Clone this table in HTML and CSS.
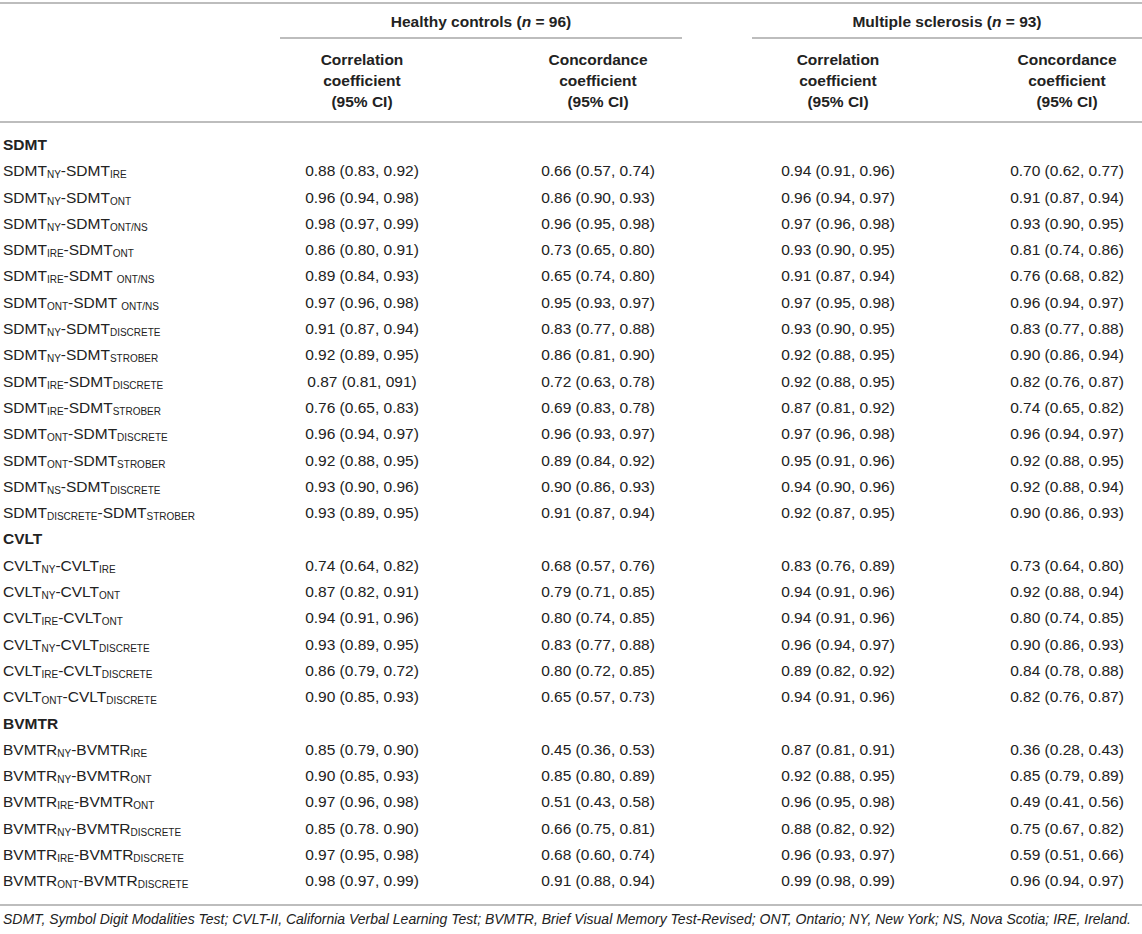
FILE: index.html
```html
<!DOCTYPE html>
<html lang="en">
<head>
<meta charset="utf-8">
<title>Correlation and concordance coefficients</title>
<link rel="stylesheet" href="styles.css">
</head>
<body>
<table class="tbl">
  <colgroup>
    <col class="c-label">
    <col class="c-hc1">
    <col class="c-hc2">
    <col class="c-ms1">
    <col class="c-ms2">
  </colgroup>
  <thead>
    <tr class="groups">
      <th></th>
      <th colspan="2"><div class="grp grp-hc">Healthy controls (<i>n</i> = 96)</div></th>
      <th colspan="2"><div class="grp grp-ms">Multiple sclerosis (<i>n</i> = 93)</div></th>
    </tr>
    <tr class="subs">
      <th></th>
      <th>Correlation<br>coefficient<br>(95% CI)</th>
      <th>Concordance<br>coefficient<br>(95% CI)</th>
      <th>Correlation<br>coefficient<br>(95% CI)</th>
      <th>Concordance<br>coefficient<br>(95% CI)</th>
    </tr>
  </thead>
  <tbody>
    <tr class="sec"><td>SDMT</td><td></td><td></td><td></td><td></td></tr>
    <tr><td>SDMT<sub>NY</sub>-SDMT<sub>IRE</sub></td><td>0.88 (0.83, 0.92)</td><td>0.66 (0.57, 0.74)</td><td>0.94 (0.91, 0.96)</td><td>0.70 (0.62, 0.77)</td></tr>
    <tr><td>SDMT<sub>NY</sub>-SDMT<sub>ONT</sub></td><td>0.96 (0.94, 0.98)</td><td>0.86 (0.90, 0.93)</td><td>0.96 (0.94, 0.97)</td><td>0.91 (0.87, 0.94)</td></tr>
    <tr><td>SDMT<sub>NY</sub>-SDMT<sub>ONT/NS</sub></td><td>0.98 (0.97, 0.99)</td><td>0.96 (0.95, 0.98)</td><td>0.97 (0.96, 0.98)</td><td>0.93 (0.90, 0.95)</td></tr>
    <tr><td>SDMT<sub>IRE</sub>-SDMT<sub>ONT</sub></td><td>0.86 (0.80, 0.91)</td><td>0.73 (0.65, 0.80)</td><td>0.93 (0.90, 0.95)</td><td>0.81 (0.74, 0.86)</td></tr>
    <tr><td>SDMT<sub>IRE</sub>-SDMT <sub>ONT/NS</sub></td><td>0.89 (0.84, 0.93)</td><td>0.65 (0.74, 0.80)</td><td>0.91 (0.87, 0.94)</td><td>0.76 (0.68, 0.82)</td></tr>
    <tr><td>SDMT<sub>ONT</sub>-SDMT <sub>ONT/NS</sub></td><td>0.97 (0.96, 0.98)</td><td>0.95 (0.93, 0.97)</td><td>0.97 (0.95, 0.98)</td><td>0.96 (0.94, 0.97)</td></tr>
    <tr><td>SDMT<sub>NY</sub>-SDMT<sub>DISCRETE</sub></td><td>0.91 (0.87, 0.94)</td><td>0.83 (0.77, 0.88)</td><td>0.93 (0.90, 0.95)</td><td>0.83 (0.77, 0.88)</td></tr>
    <tr><td>SDMT<sub>NY</sub>-SDMT<sub>STROBER</sub></td><td>0.92 (0.89, 0.95)</td><td>0.86 (0.81, 0.90)</td><td>0.92 (0.88, 0.95)</td><td>0.90 (0.86, 0.94)</td></tr>
    <tr><td>SDMT<sub>IRE</sub>-SDMT<sub>DISCRETE</sub></td><td>0.87 (0.81, 091)</td><td>0.72 (0.63, 0.78)</td><td>0.92 (0.88, 0.95)</td><td>0.82 (0.76, 0.87)</td></tr>
    <tr><td>SDMT<sub>IRE</sub>-SDMT<sub>STROBER</sub></td><td>0.76 (0.65, 0.83)</td><td>0.69 (0.83, 0.78)</td><td>0.87 (0.81, 0.92)</td><td>0.74 (0.65, 0.82)</td></tr>
    <tr><td>SDMT<sub>ONT</sub>-SDMT<sub>DISCRETE</sub></td><td>0.96 (0.94, 0.97)</td><td>0.96 (0.93, 0.97)</td><td>0.97 (0.96, 0.98)</td><td>0.96 (0.94, 0.97)</td></tr>
    <tr><td>SDMT<sub>ONT</sub>-SDMT<sub>STROBER</sub></td><td>0.92 (0.88, 0.95)</td><td>0.89 (0.84, 0.92)</td><td>0.95 (0.91, 0.96)</td><td>0.92 (0.88, 0.95)</td></tr>
    <tr><td>SDMT<sub>NS</sub>-SDMT<sub>DISCRETE</sub></td><td>0.93 (0.90, 0.96)</td><td>0.90 (0.86, 0.93)</td><td>0.94 (0.90, 0.96)</td><td>0.92 (0.88, 0.94)</td></tr>
    <tr><td>SDMT<sub>DISCRETE</sub>-SDMT<sub>STROBER</sub></td><td>0.93 (0.89, 0.95)</td><td>0.91 (0.87, 0.94)</td><td>0.92 (0.87, 0.95)</td><td>0.90 (0.86, 0.93)</td></tr>
    <tr class="sec"><td>CVLT</td><td></td><td></td><td></td><td></td></tr>
    <tr><td>CVLT<sub>NY</sub>-CVLT<sub>IRE</sub></td><td>0.74 (0.64, 0.82)</td><td>0.68 (0.57, 0.76)</td><td>0.83 (0.76, 0.89)</td><td>0.73 (0.64, 0.80)</td></tr>
    <tr><td>CVLT<sub>NY</sub>-CVLT<sub>ONT</sub></td><td>0.87 (0.82, 0.91)</td><td>0.79 (0.71, 0.85)</td><td>0.94 (0.91, 0.96)</td><td>0.92 (0.88, 0.94)</td></tr>
    <tr><td>CVLT<sub>IRE</sub>-CVLT<sub>ONT</sub></td><td>0.94 (0.91, 0.96)</td><td>0.80 (0.74, 0.85)</td><td>0.94 (0.91, 0.96)</td><td>0.80 (0.74, 0.85)</td></tr>
    <tr><td>CVLT<sub>NY</sub>-CVLT<sub>DISCRETE</sub></td><td>0.93 (0.89, 0.95)</td><td>0.83 (0.77, 0.88)</td><td>0.96 (0.94, 0.97)</td><td>0.90 (0.86, 0.93)</td></tr>
    <tr><td>CVLT<sub>IRE</sub>-CVLT<sub>DISCRETE</sub></td><td>0.86 (0.79, 0.72)</td><td>0.80 (0.72, 0.85)</td><td>0.89 (0.82, 0.92)</td><td>0.84 (0.78, 0.88)</td></tr>
    <tr><td>CVLT<sub>ONT</sub>-CVLT<sub>DISCRETE</sub></td><td>0.90 (0.85, 0.93)</td><td>0.65 (0.57, 0.73)</td><td>0.94 (0.91, 0.96)</td><td>0.82 (0.76, 0.87)</td></tr>
    <tr class="sec"><td>BVMTR</td><td></td><td></td><td></td><td></td></tr>
    <tr><td>BVMTR<sub>NY</sub>-BVMTR<sub>IRE</sub></td><td>0.85 (0.79, 0.90)</td><td>0.45 (0.36, 0.53)</td><td>0.87 (0.81, 0.91)</td><td>0.36 (0.28, 0.43)</td></tr>
    <tr><td>BVMTR<sub>NY</sub>-BVMTR<sub>ONT</sub></td><td>0.90 (0.85, 0.93)</td><td>0.85 (0.80, 0.89)</td><td>0.92 (0.88, 0.95)</td><td>0.85 (0.79, 0.89)</td></tr>
    <tr><td>BVMTR<sub>IRE</sub>-BVMTR<sub>ONT</sub></td><td>0.97 (0.96, 0.98)</td><td>0.51 (0.43, 0.58)</td><td>0.96 (0.95, 0.98)</td><td>0.49 (0.41, 0.56)</td></tr>
    <tr><td>BVMTR<sub>NY</sub>-BVMTR<sub>DISCRETE</sub></td><td>0.85 (0.78. 0.90)</td><td>0.66 (0.75, 0.81)</td><td>0.88 (0.82, 0.92)</td><td>0.75 (0.67, 0.82)</td></tr>
    <tr><td>BVMTR<sub>IRE</sub>-BVMTR<sub>DISCRETE</sub></td><td>0.97 (0.95, 0.98)</td><td>0.68 (0.60, 0.74)</td><td>0.96 (0.93, 0.97)</td><td>0.59 (0.51, 0.66)</td></tr>
    <tr class="last"><td>BVMTR<sub>ONT</sub>-BVMTR<sub>DISCRETE</sub></td><td>0.98 (0.97, 0.99)</td><td>0.91 (0.88, 0.94)</td><td>0.99 (0.98, 0.99)</td><td>0.96 (0.94, 0.97)</td></tr>
  </tbody>
</table>
<p class="note">SDMT, Symbol Digit Modalities Test; CVLT-II, California Verbal Learning Test; BVMTR, Brief Visual Memory Test-Revised; ONT, Ontario; NY, New York; NS, Nova Scotia; IRE, Ireland.</p>
</body>
</html>
```

FILE: styles.css
```css
html, body {
  margin: 0;
  padding: 0;
  background: #ffffff;
}

body {
  font-family: "Liberation Sans", Arial, sans-serif;
  font-size: 14px;
  color: #222222;
}

.tbl {
  width: 1142px;
  margin-top: 2px;
  border-collapse: collapse;
  table-layout: fixed;
  border-top: 2px solid #bdbdbd;
  font-size: 15.5px;
}

.c-label { width: 212px; }
.c-hc1 { width: 300px; }
.c-hc2 { width: 172px; }
.c-ms1 { width: 308px; }
.c-ms2 { width: 150px; }

.tbl th {
  font-weight: bold;
  text-align: center;
  padding: 0;
}

.groups th {
  vertical-align: top;
}

.grp {
  padding: 9px 0 6px;
  line-height: 18px;
  border-bottom: 2px solid #bdbdbd;
  margin-left: 68px;
}

.grp-hc {
  margin-right: 2px;
}

.grp-ms {
  margin-right: 0;
}

.subs th {
  line-height: 21px;
  padding: 10px 0 9px;
  border-bottom: 2px solid #bdbdbd;
}

.tbl td {
  padding: 4px 0;
  line-height: 18.3px;
  text-align: center;
  white-space: nowrap;
}

.tbl td:first-child {
  text-align: left;
  padding-left: 3px;
}

.tbl tbody tr:first-child td {
  padding-top: 13px;
}

.tbl tr.last td {
  padding-bottom: 13px;
  border-bottom: 2px solid #bdbdbd;
}

.sec td {
  font-weight: bold;
}

sub {
  font-size: 10px;
  line-height: 1;
  vertical-align: -2px;
}

.note {
  margin: 4px 0 0;
  padding-left: 3px;
  font-style: italic;
  font-size: 14px;
  line-height: 18px;
  white-space: nowrap;
}
```
